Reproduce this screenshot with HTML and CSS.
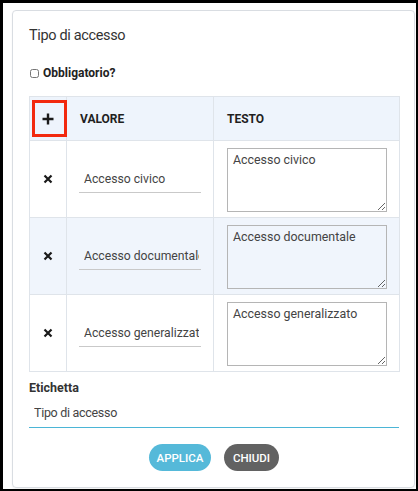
FILE: index.html
```html
<!DOCTYPE html>
<html lang="it">
<head>
<meta charset="utf-8">
<link rel="stylesheet" href="styles.css">
</head>
<body>
<div class="frame">
  <div class="card">
    <div class="title">Tipo di accesso</div>
    <label class="check"><input type="checkbox"><span>Obbligatorio?</span></label>
    <table class="grid">
      <thead>
        <tr>
          <th class="c1">
            <span class="hl"></span>
            <svg class="plus" width="14" height="14" viewBox="0 0 14 14"><path d="M7 1.5v11M1.5 7h11" stroke="#1a1a1a" stroke-width="2.4" fill="none"/></svg>
          </th>
          <th class="c2">VALORE</th>
          <th class="c3">TESTO</th>
        </tr>
      </thead>
      <tbody>
        <tr>
          <td class="c1"><svg class="x" width="10" height="10" viewBox="0 0 10 10"><path d="M1.5 1.5l7 7M8.5 1.5l-7 7" stroke="#1a1a1a" stroke-width="2.2" fill="none"/></svg></td>
          <td class="c2"><input class="val" type="text" value="Accesso civico"></td>
          <td class="c3"><textarea class="txt">Accesso civico</textarea></td>
        </tr>
        <tr class="alt">
          <td class="c1"><svg class="x" width="10" height="10" viewBox="0 0 10 10"><path d="M1.5 1.5l7 7M8.5 1.5l-7 7" stroke="#1a1a1a" stroke-width="2.2" fill="none"/></svg></td>
          <td class="c2"><input class="val" type="text" value="Accesso documentale"></td>
          <td class="c3"><textarea class="txt">Accesso documentale</textarea></td>
        </tr>
        <tr>
          <td class="c1"><svg class="x" width="10" height="10" viewBox="0 0 10 10"><path d="M1.5 1.5l7 7M8.5 1.5l-7 7" stroke="#1a1a1a" stroke-width="2.2" fill="none"/></svg></td>
          <td class="c2"><input class="val" type="text" value="Accesso generalizzato"></td>
          <td class="c3"><textarea class="txt">Accesso generalizzato</textarea></td>
        </tr>
      </tbody>
    </table>
    <div class="field">
      <div class="label">Etichetta</div>
      <input class="label-input" type="text" value="Tipo di accesso">
    </div>
    <div class="actions">
      <button class="btn apply">APPLICA</button>
      <button class="btn close">CHIUDI</button>
    </div>
  </div>
</div>
</body>
</html>
```
FILE: styles.css
```css
* { box-sizing: border-box; }
html, body { margin: 0; padding: 0; background: #fff; }
body { font-family: Roboto, "Liberation Sans", sans-serif; color: #333; }

.frame {
  width: 418px;
  height: 491px;
  border: solid #000;
  border-width: 3px 2px 2px 3px;
  padding: 7px 1px 1px 9px;
}

.card {
  height: 100%;
  border: 1px solid #d9dde2;
  border-radius: 4px;
  padding: 15px 15px 0 16px;
  box-shadow: 0 1px 2px rgba(0,0,0,0.06);
}

.title {
  font-size: 14.5px;
  line-height: 20px;
  color: #333;
  letter-spacing: -0.35px;
}

.check {
  display: flex;
  align-items: center;
  margin-top: 18px;
  height: 18px;
  font-size: 12px;
  font-weight: 700;
  color: #222;
}
.check input {
  width: 9px;
  height: 9px;
  margin: 0 4px 0 1px;
}

.grid {
  margin-top: 14px;
  width: 370px;
  border-collapse: collapse;
  table-layout: fixed;
}
.grid th, .grid td {
  border: 1px solid #dfe4ea;
  padding: 0;
  vertical-align: middle;
}
.grid th {
  background: #eef4fc;
  height: 44px;
  text-align: left;
  font-size: 12px;
  font-weight: 700;
  color: #1f1f1f;
}
.grid td { height: 77px; }
.grid tr.alt td { background: #f0f5fc; }

.grid .c1 { width: 37px; text-align: center; position: relative; }
.grid .c2 { width: 147px; padding: 0 12px; }
.grid .c3 { width: 186px; padding: 0 12px 0 13px; }
.grid th.c2, .grid th.c3 { padding-left: 13px; }

.plus, .x { display: block; margin: 0 auto; }

.hl {
  position: absolute;
  left: 2px;
  top: 3px;
  width: 35px;
  height: 37px;
  border: 3px solid #f2290e;
}

.val {
  display: block;
  width: 100%;
  height: 27px;
  border: 0;
  border-bottom: 1px solid #c9c9c9;
  background: transparent;
  padding: 0 2px 0 5px;
  font-family: inherit;
  font-size: 12.2px;
  color: #444;
  outline: none;
}

.txt {
  display: block;
  width: 160px;
  height: 64px;
  border: 1px solid #b5b5b5;
  background: transparent;
  padding: 3px 5px;
  font-family: inherit;
  font-size: 12.4px;
  color: #444;
  resize: vertical;
  margin-top: 1px;
}

.field { margin-top: 7px; }
.label {
  font-size: 12.5px;
  font-weight: 700;
  color: #333;
  line-height: 18px;
}
.label-input {
  display: block;
  width: 370px;
  height: 31px;
  border: 0;
  border-bottom: 1px solid #4bb5d6;
  padding: 0 5px;
  font-family: inherit;
  font-size: 12.5px;
  letter-spacing: -0.3px;
  color: #444;
  outline: none;
}

.actions {
  display: flex;
  justify-content: center;
  gap: 13px;
  margin-top: 16px;
}
.btn {
  height: 27px;
  border: 0;
  border-radius: 14px;
  color: #fff;
  font-family: inherit;
  font-size: 11.5px;
  font-weight: 500;
  padding: 0;
}
.apply { width: 62px; background: #55b9d9; }
.close { width: 55px; background: #626262; }
```
